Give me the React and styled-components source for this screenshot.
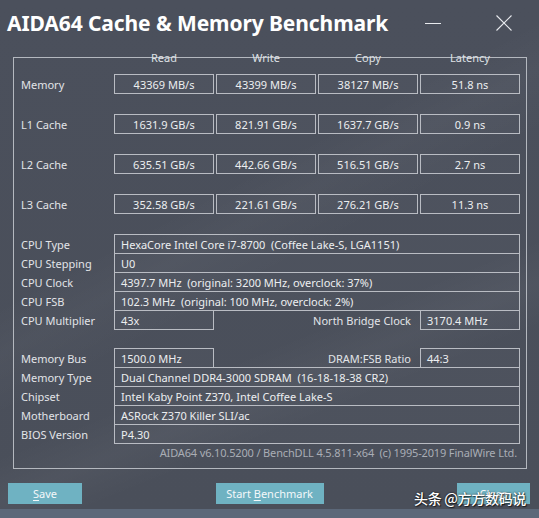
import styled, { createGlobalStyle } from "styled-components";

const GlobalStyle = createGlobalStyle`
    html, body {
        margin: 0;
        padding: 0;
    }
    body {
        width: 539px;
        height: 518px;
        overflow: hidden;
        font-family: "Noto Sans", "Open Sans", sans-serif;
        background-color: #4a4f5b;
    }
`

const StyledWindow = styled.div`
    position: relative;
    display: flex;
    flex-direction: column;
    width: 539px;
    height: 518px;
    box-sizing: border-box;
    color: #e4e6ea;
    font-size: 11px;
    background:
        linear-gradient(152deg, transparent 38%, rgba(255, 255, 255, 0.025) 44%, transparent 52%),
        linear-gradient(158deg, transparent 62%, rgba(255, 255, 255, 0.03) 68%, transparent 74%),
        linear-gradient(180deg, #4b505c 0%, #4a4f5a 100%);
`

const TitleBar = styled.div`
    display: flex;
    align-items: center;
    height: 45px;
    padding: 0 0 0 7px;
    margin-bottom: 12px;

    h1 {
        margin: 0;
        font-size: 21px;
        font-weight: 700;
        color: #ffffff;
        letter-spacing: -0.1px;
        flex: 1;
    }
`

const WinButton = styled.div`
    width: 16px;
    height: 16px;
    display: flex;
    align-items: center;
    justify-content: center;
    margin-right: ${(p) => p.$mr}px;
`

const Frame = styled.div`
    margin: 0 12px 0 13px;
    height: 412px;
    box-sizing: border-box;
    border: 1px solid #b4b8bf;
    display: flex;
    flex-direction: column;
`

const HeaderRow = styled.div`
    display: grid;
    grid-template-columns: 98px repeat(4, 100px);
    column-gap: 2px;
    height: 16px;
    line-height: 16px;
    margin-top: -8px;
    margin-bottom: 8px;

    span {
        text-align: center;
        color: #dfe1e5;
    }
`

const BenchRow = styled.div`
    display: grid;
    grid-template-columns: 98px repeat(4, 100px);
    column-gap: 2px;
    height: 20px;
    margin-bottom: 20px;
`

const Label = styled.div`
    display: flex;
    align-items: center;
    padding-left: 7px;
    white-space: nowrap;
    color: #e2e4e8;
    justify-content: ${(p) => (p.$right ? "flex-end" : "flex-start")};
    padding-right: ${(p) => (p.$right ? "7px" : "0")};
`

const Box = styled.div`
    box-sizing: border-box;
    height: 20px;
    border: 1px solid #b9bcc3;
    background-color: rgba(255, 255, 255, 0.02);
    display: flex;
    align-items: center;
    justify-content: ${(p) => (p.$center ? "center" : "flex-start")};
    padding-left: ${(p) => (p.$center ? "0" : "6px")};
    white-space: pre;
    color: #eceef0;
`

const InfoGroup = styled.div`
    display: flex;
    flex-direction: column;
    margin-top: ${(p) => p.$mt}px;
`

const InfoRow = styled.div`
    display: grid;
    grid-template-columns: 98px 100px 1fr 100px;
    column-gap: 2px;
    height: 20px;
    margin-right: 6px;

    & + & {
        margin-top: -1px;
    }

    .wide {
        grid-column: 2 / 5;
    }
`

const Footer = styled.div`
    margin-top: auto;
    height: 22px;
    padding-right: 9px;
    text-align: right;
    color: #a9adb5;
    line-height: 14px;
    white-space: pre;
    letter-spacing: -0.15px;
`

const ButtonBar = styled.div`
    display: flex;
    justify-content: space-between;
    padding: 0 9px 0 8px;
    margin-top: 14px;
`

const Button = styled.div`
    width: ${(p) => p.$w}px;
    height: 21px;
    background-color: #6fb2c2;
    color: #f4f8fa;
    display: flex;
    align-items: center;
    justify-content: center;
    font-size: 11px;

    u {
        text-decoration: underline;
        text-underline-offset: 2px;
    }
`

const BottomStrip = styled.div`
    margin-top: auto;
    height: 9px;
    background-color: #5c6879;
`

const Watermark = styled.div`
    position: absolute;
    left: 414px;
    top: 488px;
    font-family: "Noto Sans CJK SC", "Noto Sans", sans-serif;
    font-size: 14px;
    font-weight: 500;
    color: #ffffff;
    text-shadow: 0 0 2px rgba(0, 0, 0, 0.8), 1px 1px 1px rgba(0, 0, 0, 0.6);
    white-space: nowrap;
    letter-spacing: -0.3px;
`

const bench = [
    ["Memory", "43369 MB/s", "43399 MB/s", "38127 MB/s", "51.8 ns"],
    ["L1 Cache", "1631.9 GB/s", "821.91 GB/s", "1637.7 GB/s", "0.9 ns"],
    ["L2 Cache", "635.51 GB/s", "442.66 GB/s", "516.51 GB/s", "2.7 ns"],
    ["L3 Cache", "352.58 GB/s", "221.61 GB/s", "276.21 GB/s", "11.3 ns"],
]

function WideRow({ label, value }) {
    return (
        <InfoRow>
            <Label>{label}</Label>
            <Box className="wide">{value}</Box>
        </InfoRow>
    )
}

function SplitRow({ label, value, rightLabel, rightValue }) {
    return (
        <InfoRow>
            <Label>{label}</Label>
            <Box>{value}</Box>
            <Label $right>{rightLabel}</Label>
            <Box>{rightValue}</Box>
        </InfoRow>
    )
}

export default function App() {
    return (
        <StyledWindow>
            <GlobalStyle />
            <TitleBar>
                <h1>AIDA64 Cache &amp; Memory Benchmark</h1>
                <WinButton $mr={55}>
                    <svg width="16" height="16" viewBox="0 0 16 16">
                        <line x1="0" y1="8.5" x2="16" y2="8.5" stroke="#e8eaee" strokeWidth="1" />
                    </svg>
                </WinButton>
                <WinButton $mr={27}>
                    <svg width="16" height="16" viewBox="0 0 16 16">
                        <path d="M0.5 0.5 L15.5 15.5 M15.5 0.5 L0.5 15.5" stroke="#e8eaee" strokeWidth="1.1" fill="none" />
                    </svg>
                </WinButton>
            </TitleBar>

            <Frame>
                <HeaderRow>
                    <span />
                    <span>Read</span>
                    <span>Write</span>
                    <span>Copy</span>
                    <span>Latency</span>
                </HeaderRow>
                {bench.map((row) => (
                    <BenchRow key={row[0]}>
                        <Label>{row[0]}</Label>
                        {row.slice(1).map((v, i) => (
                            <Box $center key={i}>{v}</Box>
                        ))}
                    </BenchRow>
                ))}

                <InfoGroup $mt={0}>
                    <WideRow label="CPU Type" value="HexaCore Intel Core i7-8700  (Coffee Lake-S, LGA1151)" />
                    <WideRow label="CPU Stepping" value="U0" />
                    <WideRow label="CPU Clock" value="4397.7 MHz  (original: 3200 MHz, overclock: 37%)" />
                    <WideRow label="CPU FSB" value="102.3 MHz  (original: 100 MHz, overclock: 2%)" />
                    <SplitRow label="CPU Multiplier" value="43x" rightLabel="North Bridge Clock" rightValue="3170.4 MHz" />
                </InfoGroup>

                <InfoGroup $mt={18}>
                    <SplitRow label="Memory Bus" value="1500.0 MHz" rightLabel="DRAM:FSB Ratio" rightValue="44:3" />
                    <WideRow label="Memory Type" value="Dual Channel DDR4-3000 SDRAM  (16-18-18-38 CR2)" />
                    <WideRow label="Chipset" value="Intel Kaby Point Z370, Intel Coffee Lake-S" />
                    <WideRow label="Motherboard" value="ASRock Z370 Killer SLI/ac" />
                    <WideRow label="BIOS Version" value="P4.30" />
                </InfoGroup>

                <Footer>AIDA64 v6.10.5200 / BenchDLL 4.5.811-x64  (c) 1995-2019 FinalWire Ltd.</Footer>
            </Frame>

            <ButtonBar>
                <Button $w={74}><span><u>S</u>ave</span></Button>
                <Button $w={108}><span>Start <u>B</u>enchmark</span></Button>
                <Button $w={73}><span>Close</span></Button>
            </ButtonBar>
            <BottomStrip />
            <Watermark>头条 @方方数码说</Watermark>
        </StyledWindow>
    )
}
